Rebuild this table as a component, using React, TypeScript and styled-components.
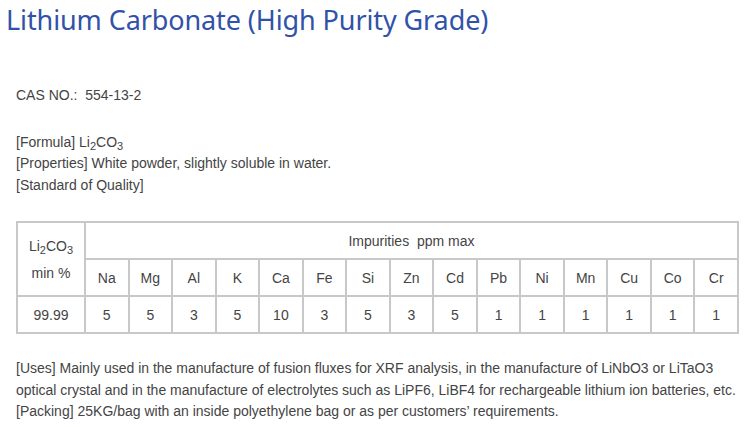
import React from "react";
import styled, { createGlobalStyle } from "styled-components";

const Global = createGlobalStyle`
  html, body { margin: 0; padding: 0; background: #fff; }
  body { font-family: "Liberation Sans", Arial, sans-serif; }
`;

const Page = styled.div`
  width: 747px;
  height: 427px;
  overflow: hidden;
  padding: 0 8px 0 16px;
  box-sizing: border-box;
  color: #444;
  font-size: 14px;
`;

const Title = styled.h1`
  margin: 0 0 0 -10px;
  padding-top: 3px;
  font-family: "Noto Sans", "Open Sans", sans-serif;
  font-weight: 400;
  font-size: 27px;
  line-height: 33px;
  color: #3152a8;
  letter-spacing: -0.1px;
  white-space: nowrap;
`;

const Para = styled.p<{ $top?: number }>`
  margin: ${(p) => p.$top ?? 0}px 0 0;
  line-height: 21.5px;
`;

const Sub = styled.sub`
  font-size: 11px;
  vertical-align: -3px;
  line-height: 0;
`;

const Table = styled.table`
  margin-top: 25px;
  width: 723px;
  border-collapse: collapse;
  border: 2px solid #c8c8c8;
  table-layout: fixed;
  font-size: 14px;
  color: #444;
`;

const Cell = styled.td<{ $w?: number }>`
  border: 2px solid #c8c8c8;
  text-align: center;
  vertical-align: middle;
  padding: 0;
  height: 35px;
  ${(p) => (p.$w ? `width: ${p.$w}px;` : "")}
`;

const FirstCell = styled(Cell)`
  line-height: 27px;
  padding-top: 2px;
`;

const elements = ["Na", "Mg", "Al", "K", "Ca", "Fe", "Si", "Zn", "Cd", "Pb", "Ni", "Mn", "Cu", "Co", "Cr"];
const values = ["5", "5", "3", "5", "10", "3", "5", "3", "5", "1", "1", "1", "1", "1", "1"];

export default function App() {
  return (
    <>
      <Global />
      <Page>
        <Title>Lithium Carbonate (High Purity Grade)</Title>
        <Para $top={49}>CAS NO.:&nbsp; 554-13-2</Para>
        <Para $top={25}>
          [Formula] Li<Sub>2</Sub>CO<Sub>3</Sub>
        </Para>
        <Para>[Properties] White powder, slightly soluble in water.</Para>
        <Para>[Standard of Quality]</Para>
        <Table>
          <tbody>
            <tr>
              <FirstCell rowSpan={2} $w={66}>
                Li<Sub>2</Sub>CO<Sub>3</Sub>
                <br />
                min %
              </FirstCell>
              <Cell colSpan={15}>Impurities&nbsp; ppm max</Cell>
            </tr>
            <tr>
              {elements.map((e) => (
                <Cell key={e}>{e}</Cell>
              ))}
            </tr>
            <tr>
              <Cell>99.99</Cell>
              {values.map((v, i) => (
                <Cell key={i}>{v}</Cell>
              ))}
            </tr>
          </tbody>
        </Table>
        <Para $top={24}>
          [Uses] Mainly used in the manufacture of fusion fluxes for XRF analysis, in the manufacture of LiNbO3 or LiTaO3
          optical crystal and in the manufacture of electrolytes such as LiPF6, LiBF4 for rechargeable lithium ion
          batteries, etc.
        </Para>
        <Para>[Packing] 25KG/bag with an inside polyethylene bag or as per customers’ requirements.</Para>
      </Page>
    </>
  );
}
